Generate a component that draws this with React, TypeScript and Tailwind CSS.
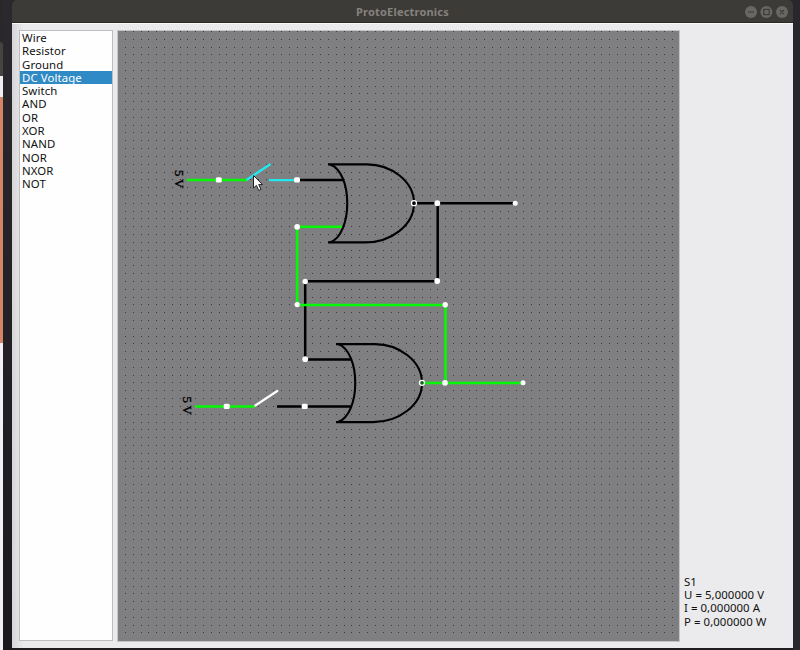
import React from "react";

const parts = ["Wire", "Resistor", "Ground", "DC Voltage", "Switch", "AND", "OR", "XOR", "NAND", "NOR", "NXOR", "NOT"];
const readings = ["S1", "U = 5,000000 V", "I = 0,000000 A", "P = 0,000000 W"];
const columns = Array.from({ length: 71 }, (_, i) => Math.floor(125.4 + i * 7.8125));
const rows = Array.from({ length: 78 }, (_, i) => Math.floor(31.4 + i * 7.8125));
const dots = rows.map((y) => columns.map((x) => `M${x} ${y}h1v1h-1z`).join("")).join("");

function Gate({ x, y }: { x: number; y: number }) {
  return (
    <g transform={`translate(${x} ${y})`} fill="none" stroke="#000" strokeWidth="2.1">
      <path d="M0 .2H39C63 .2 86 17 86 39C86 61 63 78.2 37 78.2H0" />
      <path d="M2 .2C25 8 25 70 2 78.2" />
    </g>
  );
}

function Node({ x, y, r = 2.9 }: { x: number; y: number; r?: number }) {
  return <circle cx={x} cy={y} r={r} fill="#fff" />;
}

function Terminal({ x, y }: { x: number; y: number }) {
  return <rect x={x - 3} y={y - 2.6} width="6" height="5.2" rx="1.5" fill="#fff" />;
}

function Circuit() {
  return (
    <svg className="block h-[610px] w-[561px]" viewBox="118 31 561 610">
      <rect x="118" y="31" width="561" height="610" fill="#7f7e80" />
      <path d={dots} fill="#3a393c" />
      <g fill="none" stroke="#000" strokeWidth="2.5">
        <path d="M297 180H344M414 203.3H515M437.7 203V281.3H305.2V359.5H352M277 406.5H351" />
      </g>
      <g fill="none" stroke="#04fa04" strokeWidth="2.6">
        <path d="M187 180H247M342.5 226.8H297.2V305H445.5V383M422 383H523M195 406.5H255" />
      </g>
      <g fill="none" stroke="#20e8ed" strokeWidth="2.3">
        <path d="M246.5 180L270.5 164M269 180.2H297" />
      </g>
      <path d="M254.5 406L278 390.5" stroke="#fff" strokeWidth="2.1" />
      <Gate x={328} y={164.2} />
      <Gate x={336} y={343.9} />
      <Terminal x={218.8} y={179.8} />
      <Terminal x={297} y={179.8} />
      <Terminal x={226.7} y={406.3} />
      <Terminal x={304.7} y={406.3} />
      <Node x={297.2} y={226.8} />
      <Node x={297.2} y={304.6} r={2.6} />
      <Node x={305.2} y={281.5} r={2.7} />
      <Node x={305.2} y={359.2} />
      <Node x={437.3} y={203.2} />
      <Node x={437.2} y={281} />
      <Node x={445.2} y={304.8} r={2.7} />
      <Node x={445} y={382.8} />
      <Node x={515.2} y={203.2} r={2.5} />
      <Node x={523} y={382.8} r={2.5} />
      <circle cx="414" cy="203.2" r="2.5" fill="#000" stroke="#fff" strokeWidth="1.3" />
      <circle cx="422" cy="382.8" r="2.5" fill="#126315" stroke="#fff" strokeWidth="1.3" />
      <g className="fill-black font-['Liberation_Serif',serif] text-[13px]" stroke="#000" strokeWidth=".35">
        <text transform="translate(175.3 170) rotate(90)" textLength="18.5">5 V</text>
        <text transform="translate(183 396.5) rotate(90)" textLength="18.5">5 V</text>
      </g>
      <path d="M253.5 175.5V188L256.4 185.4L258.8 190.5L261 189.4L258.7 184.6H262.5Z" fill="#fff" stroke="#242226" strokeWidth="1" />
    </svg>
  );
}

function TitleBar() {
  return (
    <header className="relative flex h-[23px] shrink-0 items-center justify-center rounded-t-[5px] border-b border-[#292825] bg-[#3d3b37]">
      <h1 className="font-['Noto_Sans',sans-serif] text-[11px] font-bold leading-none tracking-[.2px] text-[#85827d]">ProtoElectronics</h1>
      <svg className="absolute right-[4px] top-[5px] h-[14px] w-[45px]" viewBox="0 0 45 14" fill="none" stroke="#3d3b38" strokeWidth="1.2">
        <circle cx="7" cy="7" r="6" fill="#696763" stroke="none" />
        <circle cx="22.4" cy="7" r="6" fill="#696763" stroke="none" />
        <circle cx="38" cy="7" r="6" fill="#696763" stroke="none" />
        <path d="M4 7H10M36 5L40 9M40 5L36 9" />
        <rect x="19.8" y="4.4" width="5.4" height="5.2" />
      </svg>
    </header>
  );
}

export default function App() {
  return (
    <div className="flex h-[650px] w-[800px] overflow-hidden bg-[#29272b] font-['Noto_Sans',sans-serif] text-[11.4px] text-[#111]">
      <aside className="flex w-[3px] shrink-0 flex-col">
        <div className="h-[42px] bg-[#29272b]" />
        <div className="h-[34px] rounded-tr-[4px] bg-[#454440]" />
        <div className="h-[21px] bg-[#eeedef]" />
        <div className="h-[246px] border-r border-dotted border-[#bd8a72] bg-[#d78463]" />
        <div className="flex-1 bg-[#f1f0f2]" />
      </aside>
      <div className="w-[9px] shrink-0 bg-gradient-to-b from-[#2b292d] to-[#1b191d]" />
      <main className="flex w-[781px] flex-col">
        <TitleBar />
        <div className="flex h-[625px] border-t border-[#fafafa] bg-gradient-to-r from-[#d6d5d8] via-[#eae9eb] via-[1.5%] to-[#ebeaec] pl-[7px] pt-[6px]">
          <ul className="h-[611px] w-[94px] shrink-0 border border-[#bdbcbe] bg-[#fefefe]">
            {parts.map((part) => (
              <li key={part} className={`flex h-[13.3px] items-center whitespace-nowrap pl-[2px] leading-none tracking-[.1px] ${part === "DC Voltage" ? "bg-[#308ac5] text-white" : ""}`}>
                {part}
              </li>
            ))}
          </ul>
          <section className="ml-[4px] h-[612px] w-[563px] shrink-0 border border-[#c4c3c5]">
            <Circuit />
          </section>
          <section className="flex h-[598px] flex-1 flex-col justify-end pl-[4px]">
            {readings.map((reading) => (
              <p key={reading} className="flex h-[13.3px] items-center whitespace-nowrap leading-none tracking-[.06px]">{reading}</p>
            ))}
          </section>
        </div>
        <div className="h-[2px] bg-[#1e1c20]" />
      </main>
      <div className="flex-1 bg-[#29272b]" />
    </div>
  );
}
